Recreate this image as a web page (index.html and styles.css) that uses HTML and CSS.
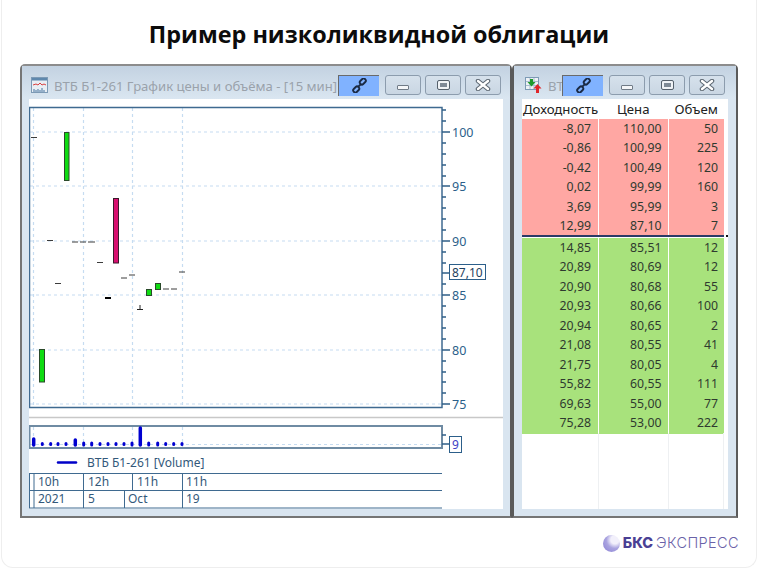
FILE: index.html
```html
<!DOCTYPE html>
<html lang="en">
<head>
    <meta charset="UTF-8">
    <meta name="viewport" content="width=device-width, initial-scale=1.0">
    <title>Пример низколиквидной облигации</title>
    <link rel="stylesheet" href="styles.css">
</head>
<body>
    <div class="card">
        <h1 class="heading">Пример низколиквидной облигации</h1>

        <!-- chart window -->
        <div class="window window-chart">
            <div class="titlebar">
                <svg class="app-icon" viewBox="0 0 17 16">
                    <rect x="0.5" y="0.5" width="16" height="15" fill="#e8eef4" stroke="#7d9ab5"/>
                    <rect x="1" y="1" width="15" height="2.5" fill="#5f88ad"/>
                    <path d="M2 8l3-1 2 1 2-2 2 2 2-1 2 1" fill="none" stroke="#d84040"/>
                    <path d="M3 15v-3M5 15v-2M7 15v-3M9 15v-2M11 15v-4M13 15v-2" stroke="#5f88ad" stroke-width="1.2"/>
                </svg>
                <div class="win-title">ВТБ Б1-261 График цены и объёма - [15 мин]</div>
                <div class="btn-link">
                    <svg viewBox="0 0 16 16" class="link-icon"><path d="M6.5 9.5l3-3" stroke="#1a2a44" stroke-width="2"/><rect x="8" y="1.5" width="7" height="4.5" rx="2" transform="rotate(-45 11.5 3.75)" fill="none" stroke="#1a2a44" stroke-width="2"/><rect x="1" y="10" width="7" height="4.5" rx="2" transform="rotate(-45 4.5 12.25)" fill="none" stroke="#1a2a44" stroke-width="2"/></svg>
                </div>
                <div class="win-buttons">
                    <div class="btn"><span class="glyph-min"></span></div>
                    <div class="btn"><span class="glyph-max"></span></div>
                    <div class="btn"><svg class="glyph-close" viewBox="0 0 16 12"><path class="x-out" d="M3 2l10 8M13 2L3 10"/><path class="x-in" d="M3 2l10 8M13 2L3 10"/></svg></div>
                </div>
            </div>
            <div class="win-body">
                <svg class="chart" viewBox="29 99 474 410" width="474" height="410">
                    <g class="grid">
                        <path d="M30 132H442M30 186H442M30 241H442M30 295H442M30 350H442M30 404H442"/>
                        <path d="M33.5 108V407M83.5 108V407M132.5 108V407M182.5 108V407"/>
                        <path d="M33.5 427V447M83.5 427V447M132.5 427V447M182.5 427V447M30 444.5H442"/>
                    </g>
                    <rect class="frame" x="29.5" y="107.5" width="412.5" height="300"/>
                    <g class="ticks">
                        <path d="M442 110H446M442 121H446M442 132H450M442 143H446M442 154H446M442 165H446M442 176H446M442 186H450M442 197H446M442 208H446M442 219H446M442 230H446M442 241H450M442 252H446M442 263H446M442 273H450M442 284H446M442 295H450M442 306H446M442 317H446M442 328H446M442 339H446M442 350H450M442 361H446M442 372H446M442 382H446M442 393H446M442 404H450"/>
                    </g>
                    <g class="axis-label">
                        <text x="452" y="137">100</text>
                        <text x="452" y="191">95</text>
                        <text x="452" y="246">90</text>
                        <text x="452" y="300">85</text>
                        <text x="452" y="355">80</text>
                        <text x="452" y="409">75</text>
                    </g>
                    <rect class="last-box" x="449.5" y="264.5" width="36" height="15"/>
                    <text class="last-text" x="452" y="277">87,10</text>

                    <g class="dashes">
                        <path d="M31 137.5H37M47 240.5H53M72 242H78M80 242H86M88 242H95M97 262.5H103M55 283.5H61M121 278H127M129 275H135M163 289H169M171 289H177M179 272H185"/>
                    </g>
                    <path class="dash-heavy" d="M105 298H111"/>
                    <path class="dash-thin" d="M137 309.5H143M140 305V309"/>
                    <rect class="up" x="64.5" y="132.5" width="4.5" height="48"/>
                    <rect class="up" x="39.5" y="349.5" width="5" height="32.5"/>
                    <rect class="up" x="146.5" y="289.5" width="5" height="6"/>
                    <rect class="up" x="155.5" y="283.5" width="5" height="6"/>
                    <rect class="down" x="113.5" y="198.5" width="5" height="64.5"/>

                    <path class="divider" d="M29 417.5H503"/>
                    <rect class="frame frame-vol" x="29.5" y="426" width="412.5" height="22"/>
                    <g class="vol-dots">
                        <path d="M42.3 443.5V444.5M50.7 443.5V444.5M58 443.5V444.5M66 443.5V444.5M83.7 443V445M91.7 443V445M100 443.5V444.5M108 443.5V444.5M116 443.5V444.5M124 443.5V444.5M132 443V445M148.7 443V445M157.7 443V445M165.7 443.5V444.5M173.7 443.5V444.5M182 443.5V444.5"/>
                    </g>
                    <g class="vol-wide">
                        <path d="M33.7 439V445M75.3 440V445M140.3 428V445"/>
                    </g>
                    <path class="ticks-vol" d="M442 435H446M442 444H449"/>
                    <rect class="last-box" x="449.5" y="436.5" width="12" height="16"/>
                    <text class="vol-text" x="452" y="449">9</text>

                    <path class="legend-line" d="M58 462.5H76"/>
                    <text class="legend-text" x="87" y="467">ВТБ Б1-261 [Volume]</text>

                    <g class="time-lines">
                        <path d="M29 473.5H442M29 490.5H442M29 508H442"/>
                        <path d="M29.5 473V508M34 473V508M83.5 473V508M182.5 473V508M132.5 473V490M124.5 490V508"/>
                    </g>
                    <g class="time-text">
                        <text x="38" y="486">10h</text>
                        <text x="88" y="486">12h</text>
                        <text x="137" y="486">11h</text>
                        <text x="186" y="486">11h</text>
                        <text x="38" y="503">2021</text>
                        <text x="88" y="503">5</text>
                        <text x="128" y="503">Oct</text>
                        <text x="186" y="503">19</text>
                    </g>
                </svg>
            </div>
        </div>

        <!-- order book window -->
        <div class="window window-book">
            <div class="titlebar">
                <svg class="app-icon" viewBox="0 0 17 16">
                    <rect x="0.5" y="0.5" width="13" height="12" fill="#eef2f6" stroke="#7d9ab5"/>
                    <path d="M1 4.5H13M1 8.5H13M5 1V12M9 1V12" stroke="#a9bccd"/>
                    <path d="M5 2h3v3h2.5L6.5 9.5 2.5 5H5z" fill="#1f9a2c"/>
                    <path d="M12.5 7l4 4.5H14V16h-3v-4.500H8.500z" fill="#e0262a"/>
                </svg>
                <div class="win-title win-title-short">ВТ</div>
                <div class="btn-link">
                    <svg viewBox="0 0 16 16" class="link-icon"><path d="M6.5 9.5l3-3" stroke="#1a2a44" stroke-width="2"/><rect x="8" y="1.5" width="7" height="4.5" rx="2" transform="rotate(-45 11.5 3.75)" fill="none" stroke="#1a2a44" stroke-width="2"/><rect x="1" y="10" width="7" height="4.5" rx="2" transform="rotate(-45 4.5 12.25)" fill="none" stroke="#1a2a44" stroke-width="2"/></svg>
                </div>
                <div class="win-buttons">
                    <div class="btn"><span class="glyph-min"></span></div>
                    <div class="btn"><span class="glyph-max"></span></div>
                    <div class="btn"><svg class="glyph-close" viewBox="0 0 16 12"><path class="x-out" d="M3 2l10 8M13 2L3 10"/><path class="x-in" d="M3 2l10 8M13 2L3 10"/></svg></div>
                </div>
            </div>
            <div class="win-body book">
                <div class="book-row book-head">
                    <div>Доходность</div><div>Цена</div><div>Объем</div>
                </div>
                <div class="book-row ask"><div>-8,07</div><div>110,00</div><div>50</div></div>
                <div class="book-row ask"><div>-0,86</div><div>100,99</div><div>225</div></div>
                <div class="book-row ask"><div>-0,42</div><div>100,49</div><div>120</div></div>
                <div class="book-row ask"><div>0,02</div><div>99,99</div><div>160</div></div>
                <div class="book-row ask"><div>3,69</div><div>95,99</div><div>3</div></div>
                <div class="book-row ask"><div>12,99</div><div>87,10</div><div>7</div></div>
                <div class="book-split"><span class="split-dot"></span></div>
                <div class="book-row bid"><div>14,85</div><div>85,51</div><div>12</div></div>
                <div class="book-row bid"><div>20,89</div><div>80,69</div><div>12</div></div>
                <div class="book-row bid"><div>20,90</div><div>80,68</div><div>55</div></div>
                <div class="book-row bid"><div>20,93</div><div>80,66</div><div>100</div></div>
                <div class="book-row bid"><div>20,94</div><div>80,65</div><div>2</div></div>
                <div class="book-row bid"><div>21,08</div><div>80,55</div><div>41</div></div>
                <div class="book-row bid"><div>21,75</div><div>80,05</div><div>4</div></div>
                <div class="book-row bid"><div>55,82</div><div>60,55</div><div>111</div></div>
                <div class="book-row bid"><div>69,63</div><div>55,00</div><div>77</div></div>
                <div class="book-row bid"><div>75,28</div><div>53,00</div><div>222</div></div>
                <div class="book-rest"><div></div><div></div><div></div></div>
            </div>
        </div>

        <div class="brand">
            <span class="brand-orb"></span>
            <span class="brand-bold">БКС</span>
            <span class="brand-light">ЭКСПРЕСС</span>
        </div>
    </div>
</body>
</html>
```

FILE: styles.css
```css
html, body {
    margin: 0;
    height: 100%;
    background-color: #ffffff;
}
body {
    font-family: "Noto Sans", Arial, sans-serif;
    overflow: hidden;
}
.card {
    position: relative;
    width: 756px;
    height: 568px;
    margin-left: 1px;
    border: 1px solid #eeeeee;
    border-top: none;
    border-radius: 0 0 12px 12px;
    box-sizing: border-box;
}
.heading {
    margin: 0;
    padding-top: 19px;
    font-family: "Open Sans", Arial, sans-serif;
    font-size: 23.4px;
    line-height: 31px;
    font-weight: 700;
    text-align: center;
    color: #0c0c0c;
}

/* windows sit on a free canvas */
.window {
    position: absolute;
    top: 64px;
    height: 454px;
    box-sizing: border-box;
    background-color: #d9e5f0;
    border: 2px solid #757575;
    border-top-color: #8c8c8c;
    border-radius: 5px 5px 0 0;
    display: flex;
    flex-direction: column;
}
.window-chart {
    left: 18px;
    width: 492px;
    padding: 0 7px 7px 7px;
    border-right-color: #5a5a5a;
}
.window-book {
    left: 510px;
    width: 226px;
    padding: 0 8px 7px 8px;
    border-left-color: #5a5a5a;
    border-right-color: #5a5a5a;
}
.titlebar {
    height: 33px;
    flex: none;
    display: flex;
    align-items: center;
    margin: 0 -7px;
    padding: 0 9px 0 9px;
    background: linear-gradient(#c3d2e1, #dae6f1);
    box-sizing: border-box;
}
.window-book .titlebar {
    margin: 0 -8px;
    padding: 0 11px 0 11px;
}
.app-icon {
    width: 17px;
    height: 16px;
    flex: none;
    margin-right: 6px;
    margin-top: 5px;
}
.win-title {
    flex: 1;
    min-width: 0;
    font-size: 13.1px;
    white-space: nowrap;
    overflow: hidden;
    color: #9aa2ab;
    margin-top: 7px;
}
.win-title-short {
    overflow: visible;
}
.btn-link {
    position: relative;
    flex: none;
    width: 41px;
    height: 21px;
    box-sizing: border-box;
    margin-top: 5px;
    background-color: #80b2ff;
    border-top: 1px solid #6a6a6a;
    border-left: 1px solid #6a6a6a;
    display: flex;
    align-items: center;
    justify-content: center;
}
.link-icon {
    width: 15px;
    height: 15px;
}
.win-buttons {
    flex: none;
    display: flex;
    gap: 4px;
    margin-left: 6px;
    margin-top: 5px;
}
.btn {
    width: 36px;
    height: 20px;
    box-sizing: border-box;
    border: 1px solid #8c9cad;
    border-radius: 3px;
    background: linear-gradient(#d6e1ec, #c9d6e3);
    display: flex;
    align-items: center;
    justify-content: center;
}
.glyph-min {
    width: 12px;
    height: 5px;
    margin-top: 4px;
    box-sizing: border-box;
    background-color: #f4f6f8;
    border: 1px solid #6f7a86;
    border-radius: 1px;
}
.glyph-max {
    width: 11px;
    height: 8px;
    box-sizing: border-box;
    border: 2px solid #f0f3f6;
    outline: 1px solid #56616c;
    background-color: #7f8a96;
    border-radius: 1px;
}
.glyph-close {
    width: 16px;
    height: 12px;
}
.x-out {
    fill: none;
    stroke: #5c6772;
    stroke-width: 4.5;
    stroke-linecap: round;
}
.x-in {
    fill: none;
    stroke: #ffffff;
    stroke-width: 2.4;
    stroke-linecap: round;
}
.win-body {
    flex: 1;
    background-color: #ffffff;
    min-height: 0;
}
.chart {
    display: block;
    font-family: "Noto Sans", Arial, sans-serif;
    font-size: 12px;
}

/* chart parts */
.grid path {
    fill: none;
    stroke: #c6dcf1;
    stroke-width: 1.2;
    stroke-dasharray: 3 3;
}
.frame {
    fill: none;
    stroke: #3f6a90;
    stroke-width: 1.5;
}
.frame-vol {
    stroke: #6f8ba3;
    stroke-width: 2;
}
.ticks path, .ticks-vol {
    stroke: #2f5f88;
    fill: none;
    stroke-width: 1.3;
}
.axis-label text {
    fill: #2c5f8a;
    font-size: 12.5px;
}
.last-box {
    fill: #ffffff;
    stroke: #2c5f8a;
}
.last-text {
    fill: #1f3f60;
}
.vol-text {
    fill: #4040c4;
}
.dashes path {
    stroke: #3c3c3c;
    fill: none;
}
.dash-heavy {
    stroke: #000000;
    stroke-width: 2;
}
.dash-thin {
    stroke: #222222;
    fill: none;
}
.up {
    fill: #0fdc12;
    stroke: #2a4a2a;
}
.down {
    fill: #d80f70;
    stroke: #3a1a2a;
}
.divider {
    stroke: #c8c8c8;
    stroke-width: 1.5;
}
.vol-dots path {
    stroke: #0000d0;
    stroke-width: 3;
    stroke-linecap: round;
}
.vol-wide path {
    stroke: #0000d0;
    stroke-width: 3.5;
    stroke-linecap: round;
}
.legend-line {
    stroke: #0000c8;
    stroke-width: 2.5;
    stroke-linecap: round;
}
.legend-text {
    fill: #33587a;
}
.time-lines path {
    stroke: #3f6a90;
    fill: none;
}
.time-text text {
    fill: #33587a;
}

/* order book */
.book {
    display: flex;
    flex-direction: column;
    font-size: 12.3px;
    color: #2f3a2f;
}
.book-row, .book-rest {
    display: grid;
    grid-template-columns: 77px 69.5px 55.5px 4px;
}
.book-row {
    height: 19.5px;
    line-height: 20.5px;
}
.book-row > div {
    text-align: right;
    box-sizing: border-box;
    border-right: 1px solid #ffffff;
}
.book-row > div:nth-child(1) {
    padding-right: 7px;
}
.book-row > div:nth-child(2) {
    padding-right: 6px;
}
.book-row > div:nth-child(3) {
    padding-right: 6px;
    border-right: none;
}
.book-head {
    font-size: 13.2px;
    color: #222222;
    background-color: #ffffff;
}
.book-head > div:nth-child(1) {
    text-align: left;
    padding: 0 0 0 1px;
    white-space: nowrap;
}
.book-head > div:nth-child(2) {
    text-align: center;
    padding: 0;
}
.book-head > div:nth-child(3) {
    text-align: center;
    padding: 0;
}
.ask > div {
    background-color: #ffa7a3;
}
.bid > div {
    background-color: #a8e27c;
}
.book-split {
    height: 2px;
    width: 202px;
    background-color: #2b3a66;
    position: relative;
    margin-top: -1px;
    margin-bottom: 1px;
}
.split-dot {
    position: absolute;
    left: 204px;
    top: 0;
    width: 2px;
    height: 2px;
    background-color: #111111;
}
.book-rest {
    flex: 1;
}
.book-rest > div {
    border-right: 1px solid #eef0f2;
}

/* logo */
.brand {
    position: absolute;
    right: 17px;
    bottom: 15px;
    display: flex;
    align-items: center;
    gap: 3px;
    font-family: "Inter", Arial, sans-serif;
    font-size: 14.5px;
    line-height: 18px;
}
.brand-orb {
    width: 17px;
    height: 17px;
    border-radius: 50%;
    background: radial-gradient(circle at 70% 28%, #f2f0fb 0 24%, #aaa4e0 50%, #8a80d4 100%);
}
.brand-bold {
    font-weight: 800;
    color: #4a3f94;
}
.brand-light {
    font-weight: 300;
    color: #6a62a8;
    letter-spacing: 0.4px;
}
```
